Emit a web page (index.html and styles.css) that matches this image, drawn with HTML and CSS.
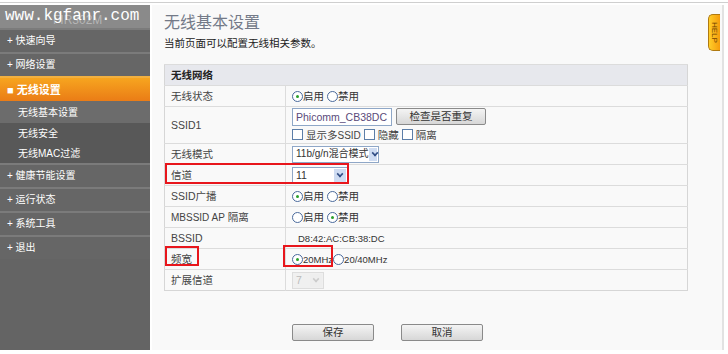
FILE: index.html
```html
<!DOCTYPE html>
<html lang="zh-CN">
<head>
    <meta charset="UTF-8">
    <title>无线基本设置</title>
    <link rel="stylesheet" href="styles.css">
</head>
<body>
    <div class="page">
        <div class="sidebar">
            <div class="logo">
                <span class="model">FIR302M</span>
                <span class="mark">www.kgfanr.com</span>
            </div>
            <div class="menu-item">+ 快速向导</div>
            <div class="menu-item">+ 网络设置</div>
            <div class="menu-item active">■ 无线设置</div>
            <div class="sub-item current">无线基本设置</div>
            <div class="sub-item">无线安全</div>
            <div class="sub-item">无线MAC过滤</div>
            <div class="menu-item">+ 健康节能设置</div>
            <div class="menu-item">+ 运行状态</div>
            <div class="menu-item">+ 系统工具</div>
            <div class="menu-item">+ 退出</div>
        </div>

        <div class="main">
            <div class="help">HELP</div>
            <h2>无线基本设置</h2>
            <p class="desc">当前页面可以配置无线相关参数。</p>

            <div class="table-wrap">
                <table class="form">
                    <tr class="head"><td colspan="2">无线网络</td></tr>
                    <tr>
                        <td class="label">无线状态</td>
                        <td><span class="radio on"></span>启用 <span class="radio"></span>禁用</td>
                    </tr>
                    <tr class="tall">
                        <td class="label">SSID1</td>
                        <td>
                            <div class="ssid-line">
                                <span class="text-box">Phicomm_CB38DC</span>
                                <span class="btn check">检查是否重复</span>
                            </div>
                            <div class="checks">
                                <span class="box"></span>显示多<span class="en">SSID</span> <span class="box"></span>隐藏 <span class="box"></span>隔离
                            </div>
                        </td>
                    </tr>
                    <tr>
                        <td class="label">无线模式</td>
                        <td><span class="select mode"><span class="en">11b/g/n</span>混合模式<i class="arrow"></i></span></td>
                    </tr>
                    <tr>
                        <td class="label">信道</td>
                        <td><span class="select chan">11<i class="arrow"></i></span></td>
                    </tr>
                    <tr>
                        <td class="label">SSID广播</td>
                        <td><span class="radio on"></span>启用 <span class="radio"></span>禁用</td>
                    </tr>
                    <tr>
                        <td class="label"><span class="en">MBSSID AP</span> 隔离</td>
                        <td><span class="radio"></span>启用 <span class="radio on"></span>禁用</td>
                    </tr>
                    <tr>
                        <td class="label">BSSID</td>
                        <td class="mac"><span class="en sm">D8:42:AC:CB:38:DC</span></td>
                    </tr>
                    <tr>
                        <td class="label">频宽</td>
                        <td><span class="radio on"></span><span class="en sm">20MHz</span><span class="radio"></span><span class="en sm">20/40MHz</span></td>
                    </tr>
                    <tr>
                        <td class="label">扩展信道</td>
                        <td><span class="select off">7<i class="arrow"></i></span></td>
                    </tr>
                </table>
                <div class="mark-box chan-box"></div>
                <div class="mark-box bw-label"></div>
                <div class="mark-box bw-value"></div>
            </div>

            <div class="actions">
                <span class="btn wide">保存</span>
                <span class="btn wide">取消</span>
            </div>
        </div>
    </div>
</body>
</html>
```

FILE: styles.css
```css
body {
    margin: 0;
    background-color: #fff;
    font-family: "Liberation Sans", "Noto Sans CJK SC", sans-serif;
    font-size: 10.5px;
    line-height: 14px;
    color: #333;
}

.en {
    font-size: 10px;
}

.en.sm {
    font-size: 9.5px;
}

.page {
    display: flex;
    height: 345px;
    margin-top: 5px;
    position: relative;
}

.page::before {
    content: "";
    position: absolute;
    left: 0;
    right: 0;
    top: -3px;
    height: 1px;
    background-color: #cfcfcf;
}

/* 左側選單 */
.sidebar {
    width: 150px;
    background-color: #646464;
    color: #fff;
    font-size: 10px;
}

.logo {
    height: 23px;
    background-color: #8a8a8a;
    position: relative;
    overflow: hidden;
}

.logo .model {
    position: absolute;
    left: 53px;
    top: 8px;
    font-size: 12px;
    color: #b5b5b5;
}

.logo .mark {
    position: absolute;
    left: 5px;
    top: 1px;
    font-family: "Liberation Mono", monospace;
    font-size: 16px;
    line-height: 20px;
    color: #fff;
}

.menu-item {
    height: 22px;
    line-height: 22px;
    padding-left: 7px;
    border-top: 2px solid #7b7b7b;
    background-color: #666;
}

.menu-item.active {
    height: 23px;
    line-height: 25px;
    background: linear-gradient(#f7a51f, #ea7c16);
    border-top-color: #f2b040;
    font-weight: bold;
    font-size: 11px;
}

.sub-item {
    height: 20px;
    line-height: 21px;
    padding-left: 18px;
    background-color: #585858;
}

.sub-item.current {
    height: 22px;
    line-height: 24px;
    background-color: #6c6c6c;
}

/* 內容 */
.main {
    flex: 1;
    margin: 0 4px 0 2px;
    padding: 0 0 0 12px;
    background-color: #f9f9f9;
    border-right: 2px solid #e2e2e2;
    position: relative;
}

.help {
    position: absolute;
    right: 2px;
    top: 9px;
    width: 11px;
    height: 35px;
    border: 1px solid #b07a10;
    border-right: 0;
    border-radius: 5px 0 0 5px;
    background: linear-gradient(90deg, #ffce2a, #f59c0c);
    writing-mode: vertical-rl;
    font-size: 8px;
    line-height: 11px;
    text-align: center;
    color: #704000;
}

h2 {
    margin: 0;
    padding-top: 6px;
    font-size: 16px;
    line-height: 20px;
    font-weight: normal;
    color: #737a88;
    font-family: "Noto Sans CJK SC", sans-serif;
}

.desc {
    margin: 5px 0 0;
    color: #222;
}

.table-wrap {
    position: relative;
    width: 524px;
    margin-top: 14px;
}

.form {
    width: 100%;
    border-collapse: collapse;
    border: 1px solid #d6d6d6;
}

.form td {
    height: 20px;
    padding: 0 0 0 6px;
    border-top: 1px solid #dcdcdc;
    white-space: nowrap;
}

.form td.label {
    width: 114px;
    border-right: 1px solid #dcdcdc;
    color: #444;
}

.form tr.head td {
    background-color: #e7e8ed;
    font-weight: bold;
    color: #222;
}

.form tr.tall td {
    height: 36px;
}

.form td.mac {
    padding-left: 12px;
}

.radio {
    display: inline-block;
    width: 9px;
    height: 9px;
    border: 1px solid #4a6a9c;
    border-radius: 50%;
    background-color: #fff;
    vertical-align: -2px;
    position: relative;
}

.radio.on::after {
    content: "";
    position: absolute;
    left: 3px;
    top: 3px;
    width: 3px;
    height: 3px;
    border-radius: 50%;
    background-color: #2aa02a;
}

.ssid-line {
    display: flex;
    gap: 4px;
    align-items: center;
}

.text-box {
    width: 95px;
    height: 16px;
    line-height: 16px;
    padding-left: 3px;
    border: 1px solid #8fa7c7;
    background-color: #fff;
    color: #5a4a7a;
}

.btn {
    display: inline-block;
    text-align: center;
    border: 1px solid #8a8a8a;
    border-radius: 2px;
    background: linear-gradient(#f4f4f4, #d7d7d7);
    color: #333;
}

.btn.check {
    width: 88px;
    height: 15px;
    line-height: 15px;
}

.checks {
    margin-top: 2px;
    color: #444;
}

.box {
    display: inline-block;
    width: 9px;
    height: 9px;
    border: 1px solid #5c7ea8;
    background-color: #fff;
    vertical-align: -1px;
    margin-right: 3px;
}

.select {
    display: inline-flex;
    align-items: center;
    justify-content: space-between;
    height: 15px;
    padding-left: 3px;
    border: 1px solid #8fa7c7;
    background-color: #fff;
    color: #333;
    vertical-align: middle;
}

.select.mode {
    width: 82px;
    font-size: 10px;
}

.select.mode .arrow {
    margin-left: auto;
}

.select.chan {
    width: 51px;
}

.select.off {
    width: 27px;
    border-color: #ddd;
    background-color: #f0f0f0;
    color: #bbb;
}

.arrow {
    width: 12px;
    height: 13px;
    margin-right: 1px;
    background-color: #cfdcf2;
    position: relative;
}

.arrow::after {
    content: "";
    position: absolute;
    left: 3px;
    top: 2px;
    width: 4px;
    height: 4px;
    border-right: 2px solid #334f86;
    border-bottom: 2px solid #334f86;
    transform: rotate(45deg) scale(0.8);
}

.select.off .arrow {
    background-color: #eee;
}

.select.off .arrow::after {
    border-color: #ccc;
}

/* 紅色標註框 */
.mark-box {
    position: absolute;
    border: 2px solid #e8161c;
}

.chan-box {
    left: 1px;
    top: 99px;
    width: 180px;
    height: 17px;
}

.bw-label {
    left: 1px;
    top: 182px;
    width: 30px;
    height: 16px;
}

.bw-value {
    left: 119px;
    top: 181px;
    width: 46px;
    height: 18px;
}

.actions {
    display: flex;
    gap: 27px;
    margin: 33px 0 0 128px;
}

.btn.wide {
    width: 80px;
    height: 15px;
    line-height: 15px;
}
```
